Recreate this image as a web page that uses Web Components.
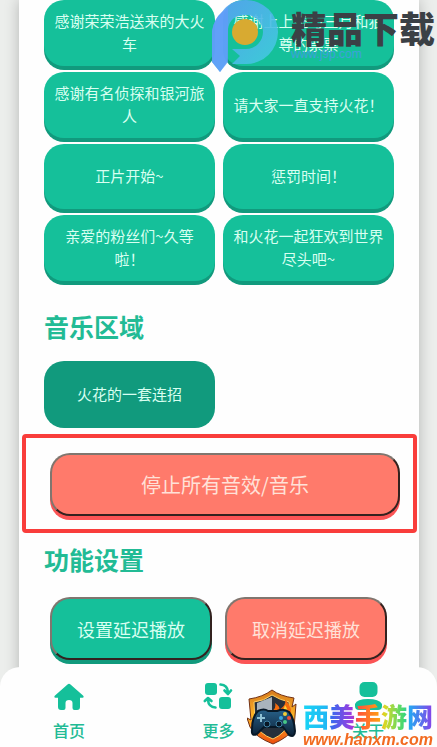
<!DOCTYPE html>
<html lang="zh-CN">
<head>
<meta charset="UTF-8">
<meta name="viewport" content="width=device-width, initial-scale=1">
<title>火花按钮</title>
<style>
    html {
        height: 100%;
        overflow: hidden;
    }

    body {
        margin: 0;
        min-height: 100%;
        background: #eceeec;
        font-family: "Noto Sans CJK SC", "Noto Sans", sans-serif;
        --green: #15c09a;
        --green-dark: #119a7d;
        --red: #ff7a6b;
        --red-dark: #fb5455;
    }
</style>
</head>
<body>

<sound-page>
    <sound-grid>
        <sound-button>感谢荣荣浩送来的大火车</sound-button>
        <sound-button>感谢上上签与三月和狼尊的票票</sound-button>
        <sound-button>感谢有名侦探和银河旅人</sound-button>
        <sound-button>请大家一直支持火花！</sound-button>
        <sound-button>正片开始~</sound-button>
        <sound-button>惩罚时间！</sound-button>
        <sound-button>亲爱的粉丝们~久等啦！</sound-button>
        <sound-button>和火花一起狂欢到世界尽头吧~</sound-button>
    </sound-grid>

    <section-title>音乐区域</section-title>
    <sound-grid>
        <sound-button pressed>火花的一套连招</sound-button>
    </sound-grid>

    <stop-panel>
        <action-button color="red" size="large">停止所有音效/音乐</action-button>
    </stop-panel>

    <section-title>功能设置</section-title>
    <action-row>
        <action-button>设置延迟播放</action-button>
        <action-button color="red">取消延迟播放</action-button>
    </action-row>
</sound-page>

<nav-bar>
    <nav-item href="#home" label="首页">
        <svg width="32" height="30" viewBox="0 0 32 30" fill="#15c09a">
            <path d="M14.500 2.500Q16 1.200 17.500 2.500L30 13.400Q31.500 15 29.600 15.700H27V25Q27 28 24 28H21.500Q19.500 28 19.500 26V21Q19.500 18 16 18T12.500 21V26Q12.500 28 10.500 28H8Q5 28 5 25V15.700H2.400Q.5 15 2 13.400Z"/>
        </svg>
    </nav-item>
    <nav-item href="#more" label="更多">
        <svg width="32" height="30" viewBox="0 0 32 30" fill="#15c09a">
            <rect x="3" y="1" width="12" height="12" rx="3"/>
            <rect x="17" y="15" width="12" height="12" rx="3"/>
            <g fill="none" stroke="#15c09a" stroke-width="2.600" stroke-linecap="round" stroke-linejoin="round">
                <path d="M18.500 2.500Q25.500 3 26 10M22.500 8.500L26 12L29 8.500"/>
                <path d="M13.500 25.500Q6.500 25 6 18M2.800 19L6 16L9.500 19"/>
            </g>
        </svg>
    </nav-item>
    <nav-item href="#about" label="关于">
        <svg width="32" height="30" viewBox="0 0 32 30" fill="#15c09a">
            <rect x="7.500" y="0" width="18" height="15" rx="5"/>
            <path d="M3 22Q5 17 16 17T30 22V24Q30 28 26 28H7Q3 28 3 24Z"/>
        </svg>
    </nav-item>
</nav-bar>

<top-watermark></top-watermark>
<bottom-watermark></bottom-watermark>

<script>
class SoundPage extends HTMLElement {
    constructor() {
        super();
        this.attachShadow({ mode: 'open' });
        this.shadowRoot.innerHTML = `
            <style>
            :host {
                display: block;
                box-sizing: border-box;
                margin: 0 18px 0 19px;
                padding: 0 25px 88px;
                background: #fefefe;
                box-shadow: 0 0 14px rgba(0, 0, 0, 0.24);
            }
            </style>
            <main><slot></slot></main>
        `;
    }
}

class SoundGrid extends HTMLElement {
    constructor() {
        super();
        this.attachShadow({ mode: 'open' });
        this.shadowRoot.innerHTML = `
            <style>
            :host {
                display: grid;
                grid-template-columns: 1fr 1fr;
                gap: 6px 8px;
            }
            </style>
            <slot></slot>
        `;
    }
}

class SoundButton extends HTMLElement {
    constructor() {
        super();
        this.attachShadow({ mode: 'open' });
        this.shadowRoot.innerHTML = `
            <style>
            :host {
                display: flex;
            }

            button {
                flex: 1;
                min-height: 65px;
                padding: 9px 10px 11px;
                border: 0;
                border-radius: 20px;
                background: var(--green);
                box-shadow: 0 4px 0 var(--green-dark);
                color: #d8fff1;
                font: inherit;
                font-size: 15px;
                line-height: 23px;
                cursor: pointer;
            }

            :host([pressed]) button,
            button:active {
                min-height: 67px;
                background: var(--green-dark);
                box-shadow: none;
            }
            </style>
            <button type="button"><slot></slot></button>
        `;
    }
}

class SectionTitle extends HTMLElement {
    constructor() {
        super();
        this.attachShadow({ mode: 'open' });
        this.shadowRoot.innerHTML = `
            <style>
            :host {
                display: block;
            }

            h2 {
                margin: 0;
                padding: 25px 0 15px;
                color: #22bb95;
                font-size: 25px;
                line-height: 40px;
                font-weight: 700;
            }

            :host(:not(:first-of-type)) h2 {
                padding: 6px 0 18px;
            }
            </style>
            <h2><slot></slot></h2>
        `;
    }
}

class StopPanel extends HTMLElement {
    constructor() {
        super();
        this.attachShadow({ mode: 'open' });
        this.shadowRoot.innerHTML = `
            <style>
            :host {
                display: flex;
                margin: 6px -23px 0 -22px;
                padding: 15px 13px 13px 24px;
                border: 4px solid #f93d3b;
                border-radius: 4px;
            }
            </style>
            <slot></slot>
        `;
    }
}

class ActionRow extends HTMLElement {
    constructor() {
        super();
        this.attachShadow({ mode: 'open' });
        this.shadowRoot.innerHTML = `
            <style>
            :host {
                display: flex;
                gap: 13px;
                padding: 0 7px 0 6px;
            }
            </style>
            <slot></slot>
        `;
    }
}

class ActionButton extends HTMLElement {
    constructor() {
        super();
        this.attachShadow({ mode: 'open' });
        this.shadowRoot.innerHTML = `
            <style>
            :host {
                display: flex;
                flex: 1;
                --face: var(--green);
                --edge: var(--green-dark);
                --ink: #d8fff1;
            }

            :host([color="red"]) {
                --face: var(--red);
                --edge: var(--red-dark);
                --ink: #ffe1d8;
            }

            button {
                flex: 1;
                min-height: 63px;
                padding: 0;
                border: 2px solid;
                border-color: #80766f #33221f #33221f #80766f;
                border-radius: 20px;
                background: var(--face);
                box-shadow: 0 4px 0 var(--edge);
                color: var(--ink);
                font: inherit;
                font-size: 18px;
                cursor: pointer;
            }

            :host([size="large"]) button {
                font-size: 20px;
            }
            </style>
            <button type="button"><slot></slot></button>
        `;
    }
}

class NavBar extends HTMLElement {
    constructor() {
        super();
        this.attachShadow({ mode: 'open' });
        this.shadowRoot.innerHTML = `
            <style>
            :host {
                display: block;
                position: fixed;
                left: 0;
                right: 0;
                bottom: 0;
            }

            nav {
                display: flex;
                justify-content: space-between;
                padding: 15px 53px 5px;
                border-radius: 20px 20px 0 0;
                background: #fefefe;
            }
            </style>
            <nav><slot></slot></nav>
        `;
    }
}

class NavItem extends HTMLElement {
    constructor() {
        super();
        this.attachShadow({ mode: 'open' });
        this.shadowRoot.innerHTML = `
            <style>
            :host {
                display: block;
            }

            a {
                display: flex;
                flex-direction: column;
                align-items: center;
                gap: 6px;
                color: #22bb95;
                font-size: 16px;
                line-height: 24px;
                font-weight: 500;
                text-decoration: none;
            }
            </style>
            <a href="${this.getAttribute('href')}">
                <slot></slot>
                <span>${this.getAttribute('label')}</span>
            </a>
        `;
    }
}

class TopWatermark extends HTMLElement {
    constructor() {
        super();
        this.attachShadow({ mode: 'open' });
        this.shadowRoot.innerHTML = `
            <style>
            :host {
                display: flex;
                gap: 11px;
                position: absolute;
                top: 0;
                right: 2px;
                pointer-events: none;
            }

            .name {
                padding-top: 6px;
                color: #3b4045;
                font-size: 36px;
                line-height: 42px;
                font-weight: 900;
                font-style: oblique 8deg;
            }

            .site {
                color: #3fa0dc;
                font-family: "Liberation Sans", sans-serif;
                font-size: 12px;
                line-height: 12px;
            }
            </style>
            <svg width="68" height="74" viewBox="0 0 68 74">
                <defs>
                    <linearGradient id="bowl" x1="0" y1="0" x2="1" y2="1">
                        <stop offset="0" stop-color="#5a9cf5"/>
                        <stop offset="1" stop-color="#3fd0dc"/>
                    </linearGradient>
                </defs>
                <path fill-rule="evenodd" fill="url(#bowl)" opacity=".9" d="M10 12Q18 0 34 0A32 32 0 0 1 34 64H20L28 56L20 49H34A17 17 0 0 0 34 15Q18 15 16 29L15 62L8 72L0 62V31Q2 19 10 12Z"/>
                <path d="M0 31Q2 19 10 12L16 8V62L8 72L0 62Z" fill="#619bfa" opacity=".8"/>
                <circle cx="33" cy="32" r="13" fill="#d8aa31"/>
            </svg>
            <div>
                <div class="name">精品下载</div>
                <div class="site">www.j9p.com</div>
            </div>
        `;
    }
}

class BottomWatermark extends HTMLElement {
    constructor() {
        super();
        this.attachShadow({ mode: 'open' });
        this.shadowRoot.innerHTML = `
            <style>
            :host {
                display: flex;
                align-items: flex-end;
                gap: 6px;
                position: fixed;
                right: 4px;
                bottom: 0;
                pointer-events: none;
            }

            .text {
                display: flex;
                flex-direction: column;
                align-items: center;
            }

            .name {
                background: linear-gradient(90deg, #18d5f5, #20b8f4 18%, #3869ee 22%, #a139df 38%, #ff513c 42%, #ff9a16 58%, #d8d925 63%, #3bd878 78%, #25a7f2 82%, #8a3ee8);
                -webkit-background-clip: text;
                background-clip: text;
                color: transparent;
                font-size: 26px;
                line-height: 32px;
                font-weight: 900;
            }

            .site {
                color: #f26b21;
                font-family: "Liberation Sans", sans-serif;
                font-size: 16px;
                line-height: 15px;
                font-weight: 700;
                font-style: italic;
            }
            </style>
            <svg width="50" height="58" viewBox="0 0 50 58">
                <defs>
                    <linearGradient id="fire" x1="0" y1="0" x2="0" y2="1">
                        <stop offset="0" stop-color="#d5791d"/>
                        <stop offset=".5" stop-color="#ffb526"/>
                        <stop offset="1" stop-color="#ed4c0c"/>
                    </linearGradient>
                    <linearGradient id="pad" x1="0" y1="0" x2="0" y2="1">
                        <stop offset="0" stop-color="#28618a"/>
                        <stop offset="1" stop-color="#0c2136"/>
                    </linearGradient>
                </defs>
                <path d="M25 1Q33 7 47 9L45 18L49 15L47 39Q42 48 26 55Q8 48 3 38L0 29L4 31L2 10Q16 8 25 1Z" fill="url(#fire)" stroke="#713015"/>
                <path d="M25 6Q33 11 42 13V33Q39 44 26 50Q12 45 8 34L7 13Q17 12 25 6Z" fill="#27303b" stroke="#ffcf64"/>
                <path d="M25 8L10 14V29L25 23Z" fill="#a9b4bc"/>
                <path d="M24 23Q30 19 28 14Q34 18 32 21Q40 16 38 10Q47 20 43 29H25Z" fill="#f46b0d"/>
                <path d="M31 24Q37 22 38 16Q43 23 39 28Z" fill="#ffd439"/>
                <path d="M11 22Q17 19 21 22H30Q37 19 42 23Q47 29 48 42Q48 49 42 46L36 38H17L10 45Q4 48 5 40Q5 28 11 22Z" fill="url(#pad)" stroke="#071827" stroke-width="2"/>
                <path d="M14 25V33M10 29H18" stroke="#8fc1d5" stroke-width="2"/>
                <g fill="#091725" stroke="#4083a7">
                    <circle cx="20" cy="35" r="3"/>
                    <circle cx="32" cy="35" r="3"/>
                </g>
                <circle cx="38" cy="25" r="2" fill="#f4ce36"/>
                <circle cx="42" cy="29" r="2" fill="#f04a33"/>
                <circle cx="34" cy="29" r="2" fill="#38a5df"/>
                <circle cx="38" cy="33" r="2" fill="#47c887"/>
            </svg>
            <div class="text">
                <div class="name">西美手游网</div>
                <div class="site">www.hanxm.com</div>
            </div>
        `;
    }
}

customElements.define('sound-page', SoundPage);
customElements.define('sound-grid', SoundGrid);
customElements.define('sound-button', SoundButton);
customElements.define('section-title', SectionTitle);
customElements.define('stop-panel', StopPanel);
customElements.define('action-row', ActionRow);
customElements.define('action-button', ActionButton);
customElements.define('nav-bar', NavBar);
customElements.define('nav-item', NavItem);
customElements.define('top-watermark', TopWatermark);
customElements.define('bottom-watermark', BottomWatermark);
</script>
</body>
</html>
